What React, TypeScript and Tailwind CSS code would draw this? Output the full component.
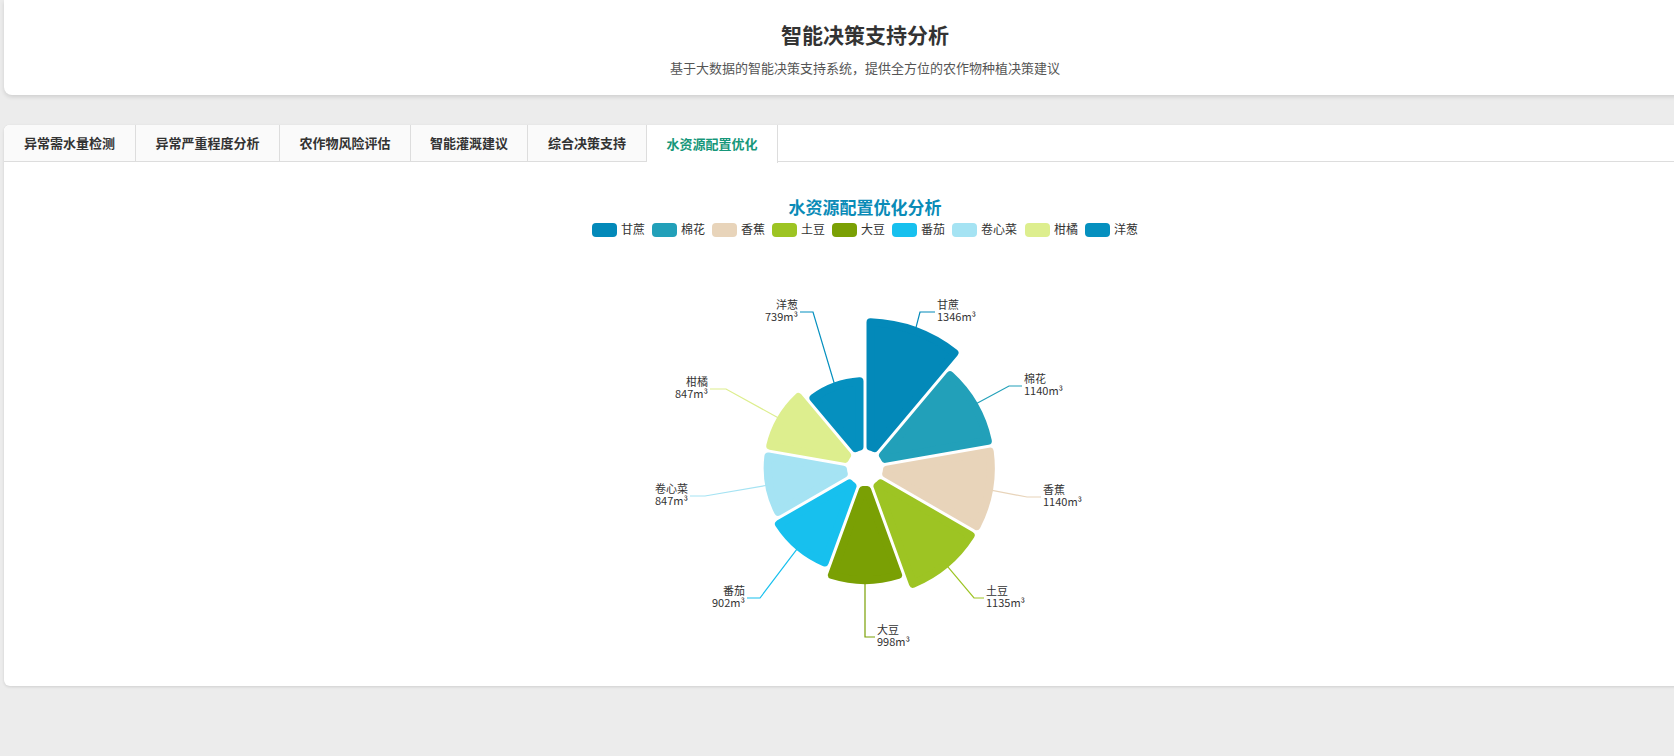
import React from "react";

const CX = 865, CY = 468, R0 = 18;
const data = [
  { n: "甘蔗", v: 1346, c: "#0389b9", e: [920, 312], t: [935, 312], side: "r" },
  { n: "棉花", v: 1140, c: "#22a0b9", e: [1009, 386], t: [1022, 386], side: "r" },
  { n: "香蕉", v: 1140, c: "#e8d4ba", e: [1027, 497], t: [1041, 497], side: "r" },
  { n: "土豆", v: 1135, c: "#9dc423", e: [974, 598], t: [984, 598], side: "r" },
  { n: "大豆", v: 998, c: "#7aa004", e: [865, 637], t: [875, 637], side: "r" },
  { n: "番茄", v: 902, c: "#17c0ee", e: [760, 598], t: [747, 598], side: "l" },
  { n: "卷心菜", v: 847, c: "#a5e3f3", e: [705, 496], t: [690, 496], side: "l" },
  { n: "柑橘", v: 847, c: "#ddee8e", e: [726, 389], t: [710, 389], side: "l" },
  { n: "洋葱", v: 739, c: "#0590bf", e: [813, 312], t: [800, 312], side: "l" },
];
const rad = (v: number) => 19 + 0.0972 * v;
const pt = (th: number, r: number, d = 0, sgn = 1) => {
  const x = CX + r * Math.sin(th) + sgn * d * Math.cos(th);
  const y = CY - r * Math.cos(th) + sgn * d * Math.sin(th);
  return [x, y];
};

function sector(i: number, v: number) {
  const a0 = (i * 40 * Math.PI) / 180, a1 = ((i + 1) * 40 * Math.PI) / 180;
  const d = 5.5, s = 4;
  const ri = R0 + s, ro = rad(v) - s;
  const off = (r: number) => Math.asin(Math.min(0.95, d / r));
  const p1 = pt(a0 + off(ri), ri), p2 = pt(a0 + off(ro), ro);
  const p3 = pt(a1 - off(ro), ro), p4 = pt(a1 - off(ri), ri);
  return `M${p1[0]},${p1[1]} L${p2[0]},${p2[1]} A${ro},${ro} 0 0 1 ${p3[0]},${p3[1]} L${p4[0]},${p4[1]} A${ri},${ri} 0 0 0 ${p1[0]},${p1[1]} Z`;
}

const tabs = ["异常需水量检测", "异常严重程度分析", "农作物风险评估", "智能灌溉建议", "综合决策支持", "水资源配置优化"];
const tabW = [132, 144, 131, 117, 119, 131];
const font = { fontFamily: '"Noto Sans CJK SC", "Noto Sans", sans-serif' };

export default function App() {
  const legendStart = 592;
  const widths = [52, 52, 52, 52, 52, 52, 65, 52, 52];
  let lx = legendStart;
  return (
    <div className="w-[1674px] h-[756px] overflow-hidden bg-[#ececec]" style={font}>
      <div className="pl-[4px] w-[1726px]">
        <div className="h-[95px] bg-white rounded-b-lg shadow-[0_2px_4px_rgba(0,0,0,0.12)] flex flex-col items-center pt-[19px]">
          <div className="text-[21px] font-bold text-[#333] leading-[30px]">智能决策支持分析</div>
          <div className="text-[13px] text-[#555] mt-[9px]">基于大数据的智能决策支持系统，提供全方位的农作物种植决策建议</div>
        </div>
        <div className="mt-[30px] bg-white rounded-md shadow-[0_1px_3px_rgba(0,0,0,0.12)] h-[561px] overflow-hidden">
          <div className="flex h-[37px] border-b border-[#ddd] bg-white">
            {tabs.map((t, i) => (
              <div
                key={t}
                style={{ width: tabW[i] }}
                className={
                  i === 5
                    ? "flex items-center justify-center text-[13px] font-bold text-[#16977a] bg-white border-r border-[#ddd] h-[38px]"
                    : "flex items-center justify-center text-[13px] font-bold text-[#333] bg-[#fafafa] border-r border-[#ddd]"
                }
              >
                {t}
              </div>
            ))}
          </div>
          <svg width={1722} height={524} viewBox="4 162 1722 524">
            <text x={865} y={214} textAnchor="middle" fontSize={17} fontWeight={700} fill="#0a8bb7">水资源配置优化分析</text>
            {data.map((d, i) => {
              const x = lx;
              lx += widths[i] + 8;
              return (
                <g key={d.n}>
                  <rect x={x} y={223} width={25} height={14} rx={4} fill={d.c} />
                  <text x={x + 29} y={234} fontSize={12} fill="#333">{d.n}</text>
                </g>
              );
            })}
            {data.map((d, i) => {
              const mid = ((i * 40 + 20) * Math.PI) / 180;
              const s = pt(mid, rad(d.v) - 2);
              const tx = d.side === "r" ? d.t[0] + 2 : d.t[0] - 2;
              return (
                <g key={d.n + "s"}>
                  <path d={sector(i, d.v)} fill={d.c} stroke={d.c} strokeWidth={8} strokeLinejoin="round" />
                  <polyline points={`${s[0]},${s[1]} ${d.e[0]},${d.e[1]} ${d.t[0]},${d.t[1]}`} fill="none" stroke={d.c} strokeWidth={1.2} />
                  <text y={d.t[1] - 3} fontSize={11} fill="#333" textAnchor={d.side === "r" ? "start" : "end"}>
                    <tspan x={tx}>{d.n}</tspan>
                    <tspan x={tx} dy={12}>{d.v}m³</tspan>
                  </text>
                </g>
              );
            })}
          </svg>
        </div>
      </div>
    </div>
  );
}
